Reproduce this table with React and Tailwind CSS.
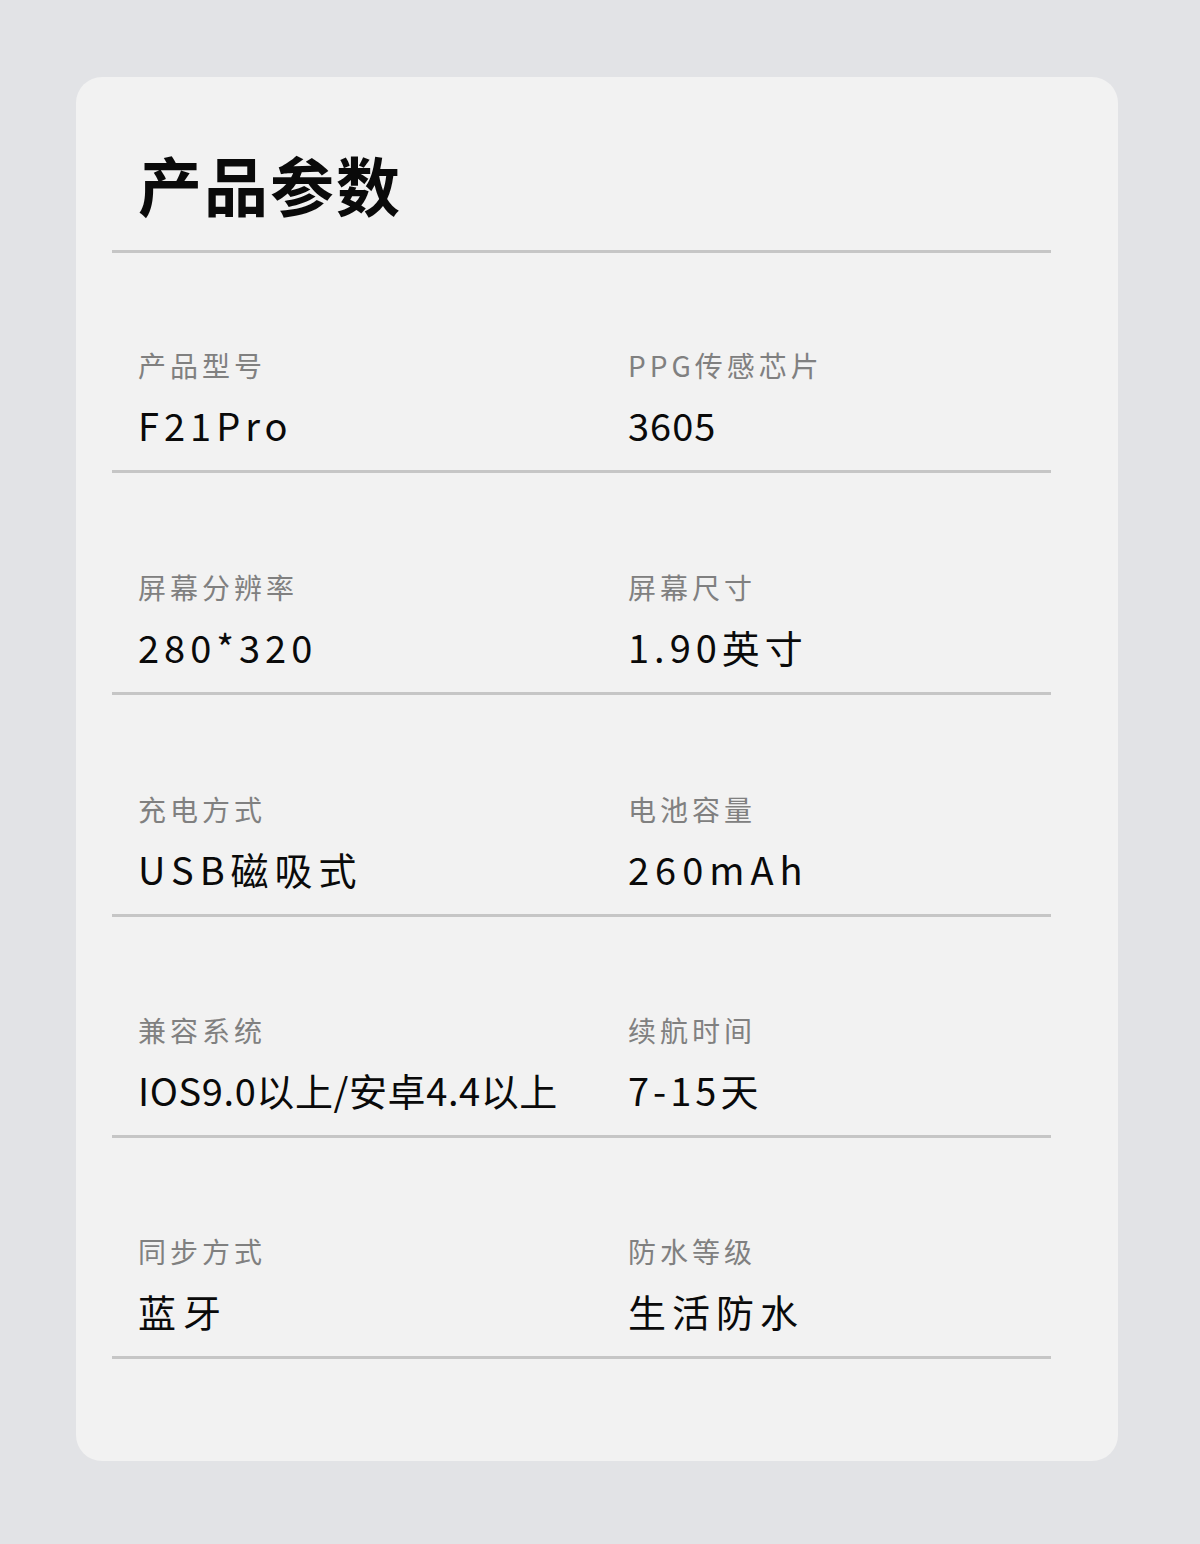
import React from "react";

const rows = [
  [
    { label: "产品型号", value: "F21Pro", vt: "tracking-[5px]" },
    { label: "PPG传感芯片", value: "3605", vt: "tracking-[1px]" },
  ],
  [
    { label: "屏幕分辨率", value: "280*320", vt: "tracking-[5px]" },
    { label: "屏幕尺寸", value: "1.90英寸", vt: "tracking-[5px]" },
  ],
  [
    { label: "充电方式", value: "USB磁吸式", vt: "tracking-[6px]" },
    { label: "电池容量", value: "260mAh", vt: "tracking-[6px]" },
  ],
  [
    { label: "兼容系统", value: "IOS9.0以上/安卓4.4以上", vt: "tracking-[0.6px]" },
    { label: "续航时间", value: "7-15天", vt: "tracking-[4px]" },
  ],
  [
    { label: "同步方式", value: "蓝牙", vt: "tracking-[7px]" },
    { label: "防水等级", value: "生活防水", vt: "tracking-[6px]" },
  ],
];

const pts = ["pt-[92px]", "pt-[94px]", "pt-[94px]", "pt-[93px]", "pt-[93px]"];

function Cell({ label, value, vt }) {
  return (
    <div className="flex flex-col">
      <div className="text-[28px] leading-[40px] tracking-[4px] text-[#808080] whitespace-nowrap">
        {label}
      </div>
      <div
        className={`mt-[16px] text-[38px] leading-[48px] font-normal text-[#0a0a0a] whitespace-nowrap ${vt}`}
      >
        {value}
      </div>
    </div>
  );
}

export default function App() {
  return (
    <div
      className="w-[1200px] min-h-[1544px] bg-[#e2e3e6] pt-[77px] pb-[83px]"
      style={{ fontFamily: '"Noto Sans CJK SC", "Noto Sans", sans-serif' }}
    >
      <div className="ml-[76px] w-[1042px] rounded-[26px] bg-[#f2f2f2] pl-[36px] pr-[67px] pt-[66px] pb-[102px]">
        <div className="border-b-[3px] border-[#c6c6c6] pb-[27px]">
          <h1 className="pl-[26px] text-[64px] leading-[80px] font-bold tracking-[2px] text-[#0a0a0a]">
            产品参数
          </h1>
        </div>
        {rows.map((r, i) => (
          <div
            key={i}
            className={`grid grid-cols-[490px_1fr] pl-[26px] pb-[21px] border-b-[3px] border-[#c6c6c6] ${pts[i]}`}
          >
            <Cell {...r[0]} />
            <Cell {...r[1]} />
          </div>
        ))}
      </div>
    </div>
  );
}
